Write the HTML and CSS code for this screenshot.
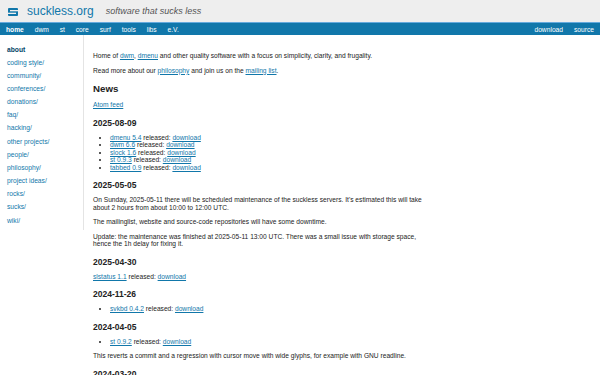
FILE: index.html
```html
<!DOCTYPE html>
<html lang="en">
<head>
    <meta charset="UTF-8">
    <meta name="viewport" content="width=device-width, initial-scale=1.0">
    <title>software that sucks less | suckless.org software that sucks less</title>
    <link rel="stylesheet" href="styles.css">
</head>
<body>

    <div class="header">
        <a class="logo" href="#">
            <svg width="10" height="8" viewBox="0 0 10 8">
                <rect x="0" y="0" width="10" height="8" rx="1" fill="#17a"/>
                <rect x="2" y="2" width="8" height="1.3" fill="#eee"/>
                <rect x="0" y="4.7" width="8" height="1.3" fill="#eee"/>
            </svg>
            <span class="site">suckless.org</span>
        </a>
        <span class="tagline">software that sucks less</span>
    </div>

    <div class="menu">
        <div class="menu-left">
            <a class="current" href="#">home</a>
            <a href="#">dwm</a>
            <a href="#">st</a>
            <a href="#">core</a>
            <a href="#">surf</a>
            <a href="#">tools</a>
            <a href="#">libs</a>
            <a href="#">e.V.</a>
        </div>
        <div class="menu-right">
            <a href="#">download</a>
            <a href="#">source</a>
        </div>
    </div>

    <div class="main">
        <div class="nav">
            <a class="current" href="#">about</a>
            <a href="#">coding style/</a>
            <a href="#">community/</a>
            <a href="#">conferences/</a>
            <a href="#">donations/</a>
            <a href="#">faq/</a>
            <a href="#">hacking/</a>
            <a href="#">other projects/</a>
            <a href="#">people/</a>
            <a href="#">philosophy/</a>
            <a href="#">project ideas/</a>
            <a href="#">rocks/</a>
            <a href="#">sucks/</a>
            <a href="#">wiki/</a>
        </div>

        <div class="content">
            <p>Home of <a href="#">dwm</a>, <a href="#">dmenu</a> and other quality software with a focus on simplicity, clarity, and frugality.</p>
            <p>Read more about our <a href="#">philosophy</a> and join us on the <a href="#">mailing list</a>.</p>

            <h2>News</h2>
            <p><a href="#">Atom feed</a></p>

            <h3>2025-08-09</h3>
            <ul>
                <li><a href="#">dmenu 5.4</a> released: <a href="#">download</a></li>
                <li><a href="#">dwm 6.6</a> released: <a href="#">download</a></li>
                <li><a href="#">slock 1.6</a> released: <a href="#">download</a></li>
                <li><a href="#">st 0.9.3</a> released: <a href="#">download</a></li>
                <li><a href="#">tabbed 0.9</a> released: <a href="#">download</a></li>
            </ul>

            <h3>2025-05-05</h3>
            <p>On Sunday, 2025-05-11 there will be scheduled maintenance of the suckless servers. It's estimated this will take about 2 hours from about 10:00 to 12:00 UTC.</p>
            <p>The mailinglist, website and source-code repositories will have some downtime.</p>
            <p>Update: the maintenance was finished at 2025-05-11 13:00 UTC. There was a small issue with storage space, hence the 1h delay for fixing it.</p>

            <h3>2025-04-30</h3>
            <p><a href="#">slstatus 1.1</a> released: <a href="#">download</a></p>

            <h3>2024-11-26</h3>
            <ul>
                <li><a href="#">svkbd 0.4.2</a> released: <a href="#">download</a></li>
            </ul>

            <h3>2024-04-05</h3>
            <ul>
                <li><a href="#">st 0.9.2</a> released: <a href="#">download</a></li>
            </ul>
            <p>This reverts a commit and a regression with cursor move with wide glyphs, for example with GNU readline.</p>

            <h3>2024-03-20</h3>
        </div>
    </div>

</body>
</html>
```

FILE: styles.css
```css
body {
    font-family: "Liberation Sans", Arial, sans-serif;
    font-size: 6.65px;
    color: #222;
    background-color: #fff;
    margin: 0;
    padding: 0;
}
a {
    color: #17a;
}
.header {
    background-color: #eee;
    height: 22px;
    display: flex;
    align-items: center;
    padding-left: 8px;
}
.logo {
    display: flex;
    align-items: center;
    gap: 9px;
    text-decoration: none;
}
.logo svg {
    display: block;
    margin-top: 1px;
}
.site {
    font-size: 12px;
    color: #17a;
}
.tagline {
    font-size: 9px;
    font-style: italic;
    color: #555;
    margin-left: 12px;
}
.menu {
    background-color: #17a;
    border-top: 1px solid #6ad;
    height: 12px;
    display: flex;
    align-items: center;
    justify-content: space-between;
    padding: 0 6px;
}
.menu a {
    color: #fff;
    text-decoration: none;
    font-size: 6.7px;
    margin-right: 9px;
}
.menu-right a {
    margin-right: 0;
    margin-left: 9px;
}
.menu a.current {
    font-weight: bold;
}
.main {
    display: flex;
    align-items: flex-start;
}
.nav {
    width: 76px;
    flex-shrink: 0;
    padding: 7.5px 0 3px 7px;
    border-right: 1px solid #e4e4e4;
    display: flex;
    flex-direction: column;
}
.nav a {
    display: block;
    line-height: 13.15px;
    font-size: 6.7px;
    text-decoration: none;
}
.nav a.current {
    font-weight: bold;
    color: #046;
}
.content {
    max-width: 338px;
    padding: 10px 0 0 9px;
}
p {
    margin: 7px 0;
    line-height: 7.5px;
}
h2 {
    font-size: 9.7px;
    line-height: 11px;
    margin: 9px 0 7px;
}
h3 {
    font-size: 8.5px;
    line-height: 7px;
    margin: 11px 0 6px;
}
ul {
    margin: 7px 0;
    padding-left: 17px;
}
li {
    line-height: 7.5px;
}
```
